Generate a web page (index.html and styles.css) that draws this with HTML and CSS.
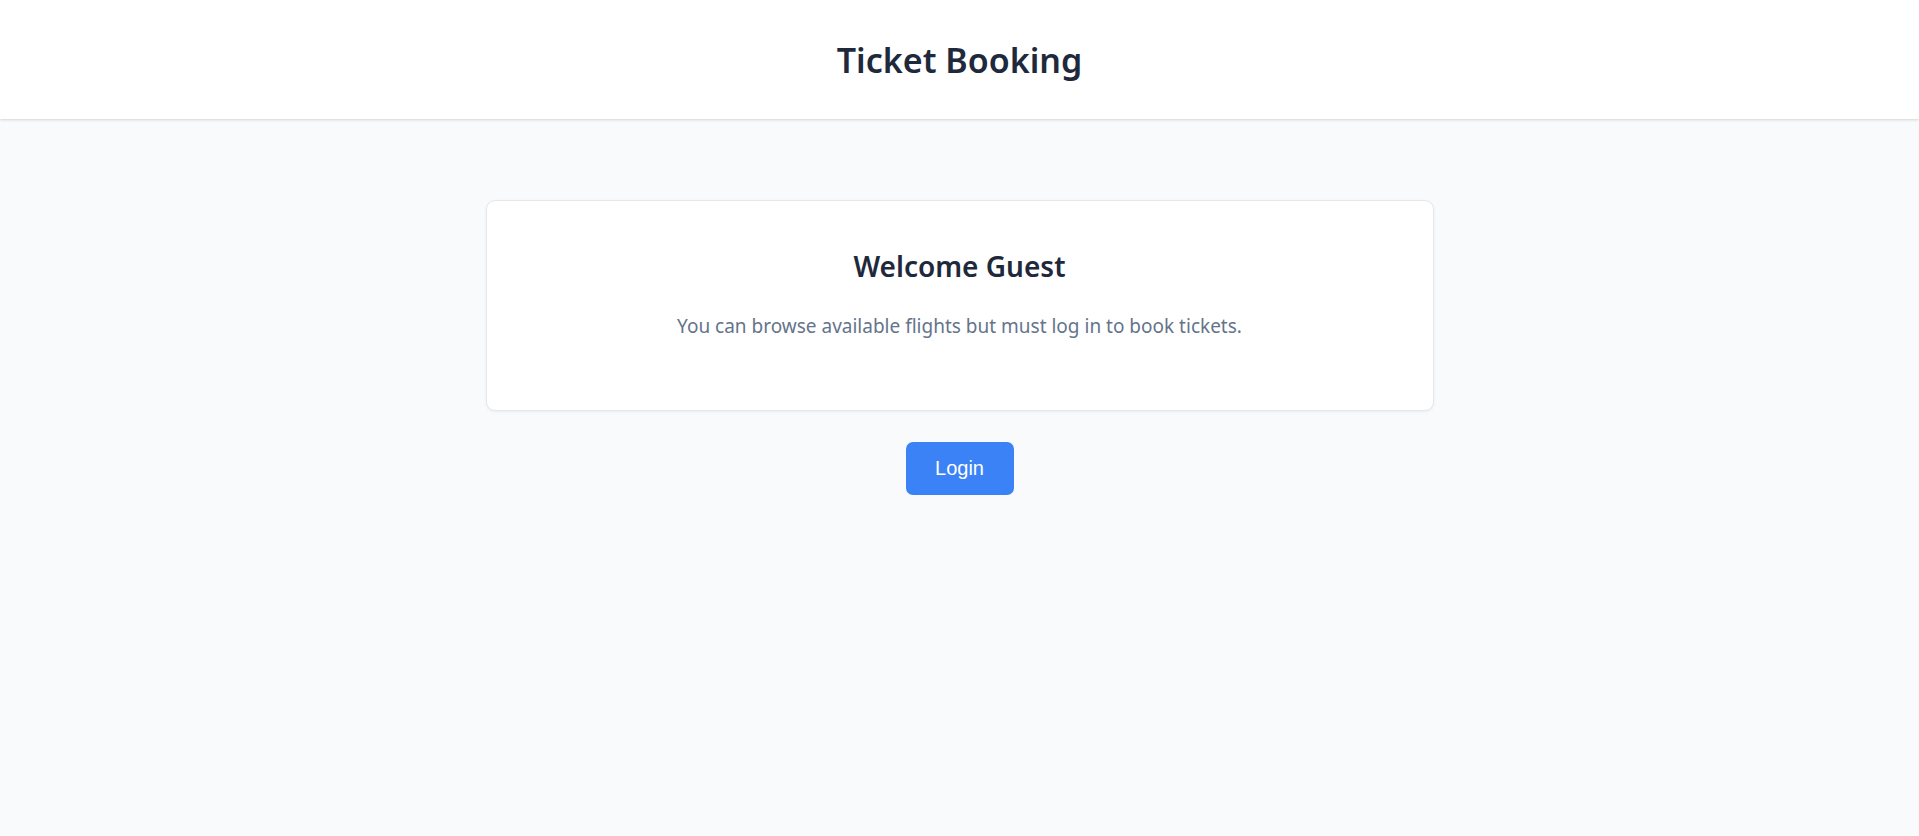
FILE: index.html
```html
<!DOCTYPE html>
<html lang="en">
<head>
<meta charset="utf-8">
<title>Ticket Booking</title>
<link rel="stylesheet" href="styles.css">
</head>
<body>
<header class="header">
  <h1 class="title">Ticket Booking</h1>
</header>
<main class="main">
  <section class="card">
    <h2 class="card-title">Welcome Guest</h2>
    <p class="card-text">You can browse available flights but must log in to book tickets.</p>
  </section>
  <button class="btn">Login</button>
</main>
</body>
</html>
```

FILE: styles.css
```css
* { box-sizing: border-box; }
html, body { margin: 0; padding: 0; }
body {
  background: #f9fafb;
  font-family: "Noto Sans", "Open Sans", sans-serif;
  color: #1f2937;
  min-height: 836px;
}
.header {
  background: #ffffff;
  height: 119px;
  display: flex;
  align-items: center;
  justify-content: center;
  box-shadow: 0 1px 3px rgba(0,0,0,0.10), 0 1px 2px rgba(0,0,0,0.06);
}
.title {
  margin: 0;
  font-size: 34px;
  font-weight: 600;
  color: #1e293b;
  line-height: 1;
}
.main {
  display: flex;
  flex-direction: column;
  align-items: center;
  padding-top: 81px;
}
.card {
  width: 948px;
  height: 211px;
  background: #ffffff;
  border: 1px solid #e5e7eb;
  border-radius: 9px;
  box-shadow: 0 1px 3px rgba(0,0,0,0.06);
  padding: 47px 32px 0;
  text-align: center;
}
.card-title {
  margin: 0;
  font-size: 28px;
  font-weight: 600;
  color: #1e293b;
  line-height: 36px;
}
.card-text {
  margin: 28px 0 0;
  font-size: 19px;
  color: #64748b;
  line-height: 28px;
}
.btn {
  margin-top: 31px;
  width: 108px;
  height: 53px;
  background: #3b82f6;
  color: #ffffff;
  border: none;
  border-radius: 7px;
  font-family: "Liberation Sans", Arial, sans-serif;
  font-size: 20px;
  cursor: pointer;
}
```
